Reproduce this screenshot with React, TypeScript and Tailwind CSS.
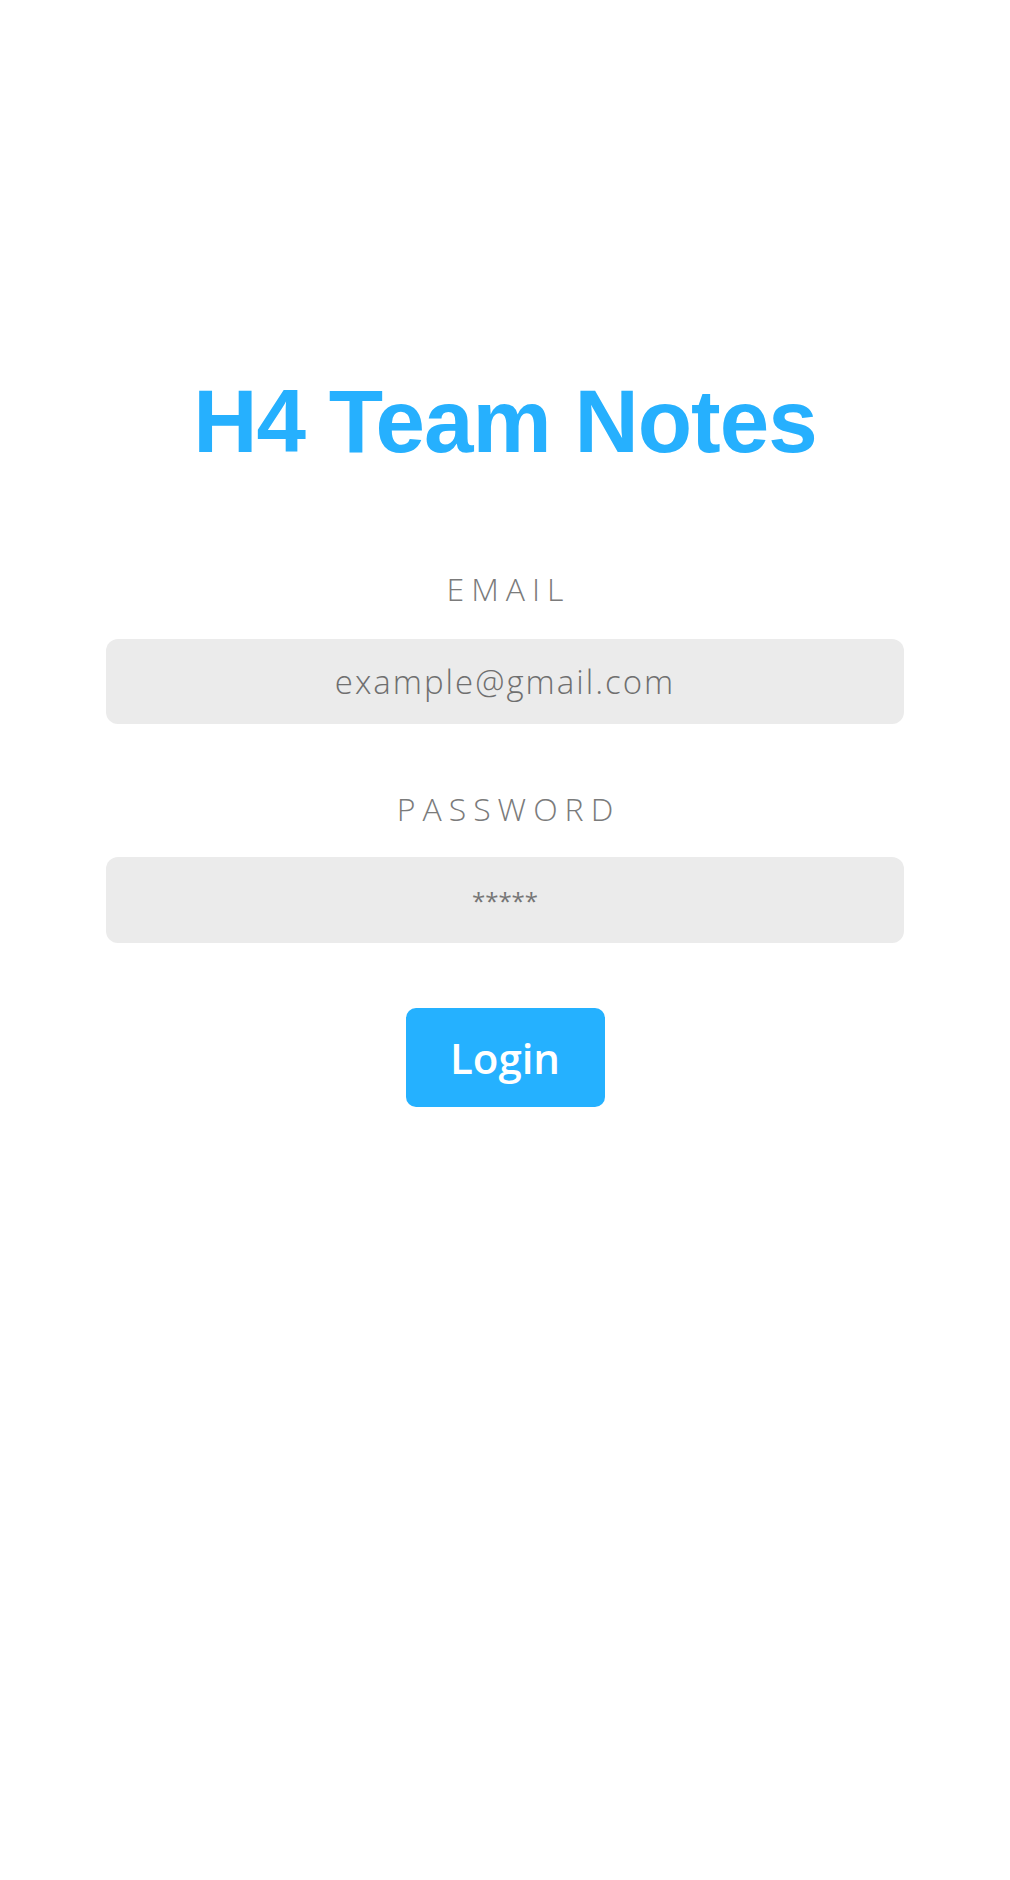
export default function App() {
  return (
    <div className="min-h-screen bg-white flex flex-col items-center pt-[377px] font-['Open_Sans',sans-serif]">
      {/* TITLE */}
      <h1 className="text-[89px] leading-none font-bold tracking-[-1px] text-[#26b0fe] font-['Liberation_Sans',Arial,sans-serif]">
        H4 Team Notes
      </h1>

      {/* LOGIN FORM */}
      <form className="w-[798px] mt-[107px] flex flex-col items-center" onSubmit={(e) => e.preventDefault()}>
        <label htmlFor="email" className="text-[32px] leading-none font-light tracking-[7px] pl-[7px] text-[#7b7b7b]">
          EMAIL
        </label>
        <input
          id="email"
          type="email"
          placeholder="example@gmail.com"
          className="mt-[34px] w-full h-[85px] rounded-[12px] bg-[#ebebeb] text-center text-[33px] font-light tracking-[2px] text-[#6f6f6f] placeholder:text-[#6f6f6f] outline-none"
        />

        <label htmlFor="password" className="mt-[69px] text-[32px] leading-none font-light tracking-[7px] pl-[7px] text-[#7b7b7b]">
          PASSWORD
        </label>
        <input
          id="password"
          type="password"
          placeholder="*****"
          className="mt-[32px] w-full h-[86px] rounded-[12px] bg-[#ebebeb] text-center text-[24px] text-[#757575] placeholder:text-[#757575] outline-none"
        />

        <button
          type="submit"
          className="mt-[65px] w-[199px] h-[99px] rounded-[10px] bg-[#25b1ff] text-white text-[42px] font-semibold"
        >
          Login
        </button>
      </form>
    </div>
  );
}
